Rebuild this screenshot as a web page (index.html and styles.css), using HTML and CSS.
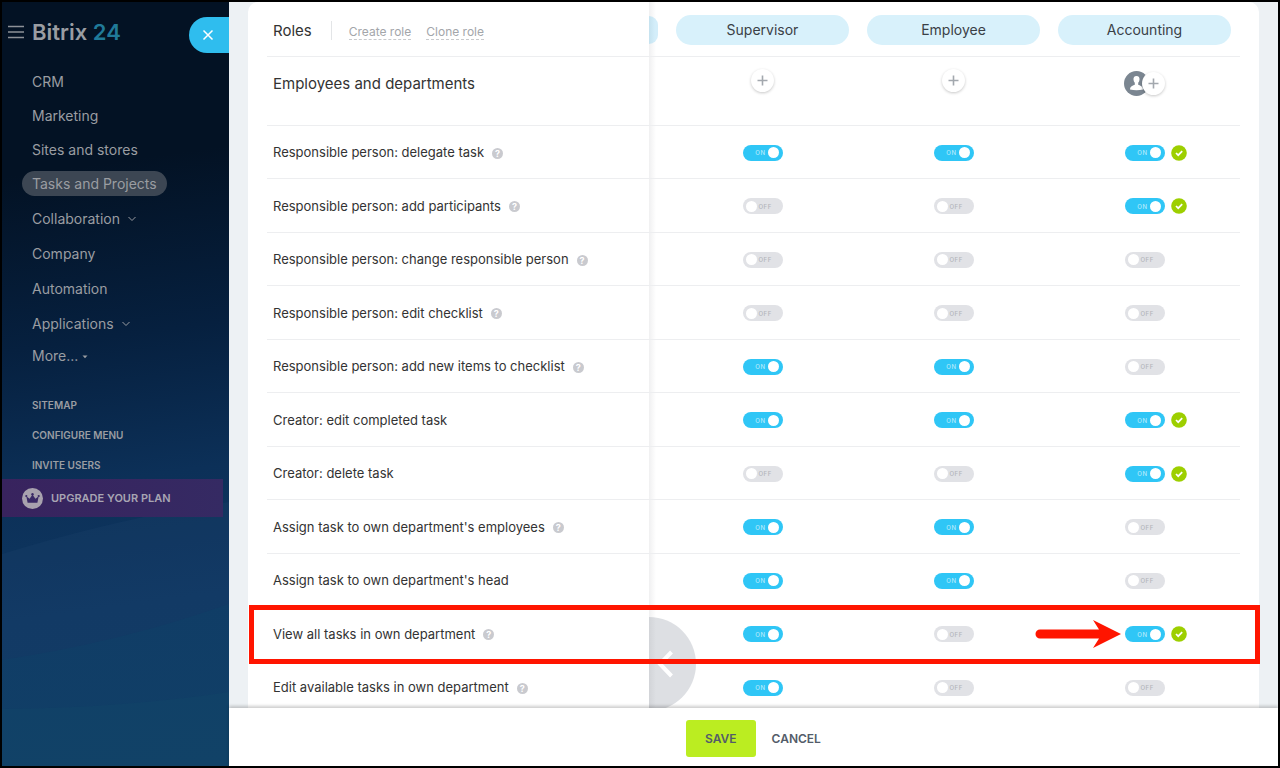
FILE: index.html
```html
<!DOCTYPE html>
<html lang="en">
<head>
    <meta charset="UTF-8">
    <meta name="viewport" content="width=device-width, initial-scale=1.0">
    <title>Bitrix 24 - Access permissions</title>
    <link rel="stylesheet" href="styles.css">
</head>
<body>
    <aside class="sidebar">
        <svg class="sidebar-waves" viewBox="0 0 227 764" preserveAspectRatio="none" aria-hidden="true">
            <path d="M0 552 Q120 515 227 500 V764 H0Z" fill="#4d78a8" opacity=".06"/>
            <path d="M0 658 Q120 640 227 602 V764 H0Z" fill="#0b5a70" opacity=".12"/>
            <path d="M0 707 Q120 706 227 690 V764 H0Z" fill="#1c6478" opacity=".08"/>
        </svg>

        <header class="brand">
            <button type="button" class="burger" aria-label="Menu">
                <svg width="16" height="14" viewBox="0 0 16 14"><path d="M0 1.5h16M0 7h16M0 12.5h16" stroke="currentColor" stroke-width="1.6"/></svg>
            </button>
            <a href="#" class="logo">Bitrix <span>24</span></a>
        </header>

        <nav>
            <ul class="menu">
                <li><a href="#">CRM</a></li>
                <li><a href="#">Marketing</a></li>
                <li><a href="#">Sites and stores</a></li>
                <li><a href="#" class="active">Tasks and Projects</a></li>
                <li><a href="#">Collaboration <svg width="8" height="6" viewBox="0 0 8 6"><path d="M.5 1 4 4.5 7.5 1" fill="none" stroke="currentColor"/></svg></a></li>
                <li><a href="#">Company</a></li>
                <li><a href="#">Automation</a></li>
                <li><a href="#">Applications <svg width="8" height="6" viewBox="0 0 8 6"><path d="M.5 1 4 4.5 7.5 1" fill="none" stroke="currentColor"/></svg></a></li>
                <li class="more"><a href="#">More... <svg width="6" height="4" viewBox="0 0 6 4"><path d="M.5.5h5L3 3.2z" fill="currentColor"/></svg></a></li>
            </ul>
            <ul class="submenu">
                <li><a href="#">SITEMAP</a></li>
                <li><a href="#">CONFIGURE MENU</a></li>
                <li><a href="#">INVITE USERS</a></li>
            </ul>
            <a href="#" class="upgrade">
                <svg width="21" height="21" viewBox="0 0 21 21"><circle cx="10.5" cy="10.5" r="10.5" fill="#a8a2ae"/><path d="M5.600 14.800 4.300 8.200l3.300 2.500L10.500 6.500l2.900 4.200 3.300-2.500-1.300 6.600z" fill="#3a2a66"/><circle cx="10.5" cy="6.2" r="1.2" fill="#3a2a66"/><circle cx="4.3" cy="8" r="1.1" fill="#3a2a66"/><circle cx="16.7" cy="8" r="1.1" fill="#3a2a66"/></svg>
                <span>UPGRADE YOUR PLAN</span>
            </a>
        </nav>

        <button type="button" class="close-tab" aria-label="Close">
            <svg width="12" height="12" viewBox="0 0 12 12"><path d="M1.500 1.500l9 9M10.500 1.500l-9 9" stroke="currentColor" stroke-width="1.5"/></svg>
        </button>
    </aside>

    <main class="panel">
        <div class="content">
            <section class="card">
                <table class="rights">
                    <colgroup>
                        <col>
                        <col class="col-edge">
                        <col class="col-role">
                        <col class="col-role">
                        <col class="col-role">
                    </colgroup>
                    <thead>
                        <tr>
                            <th scope="col">
                                <div class="roles-head">
                                    <span class="roles-title">Roles</span>
                                    <a href="#">Create role</a>
                                    <a href="#">Clone role</a>
                                </div>
                            </th>
                            <td class="edge"><span class="pill-end"></span></td>
                            <th scope="col"><span class="pill">Supervisor</span></th>
                            <th scope="col"><span class="pill">Employee</span></th>
                            <th scope="col"><span class="pill">Accounting</span></th>
                        </tr>
                        <tr class="members">
                            <th scope="row">Employees and departments</th>
                            <td class="edge"></td>
                            <td><div class="people"><button type="button" class="add" aria-label="Add to Supervisor"><svg width="11" height="11" viewBox="0 0 11 11"><path d="M5.500 .5v10M.5 5.500h10" stroke="currentColor" stroke-width="1.6"/></svg></button></div></td>
                            <td><div class="people"><button type="button" class="add" aria-label="Add to Employee"><svg width="11" height="11" viewBox="0 0 11 11"><path d="M5.500 .5v10M.5 5.500h10" stroke="currentColor" stroke-width="1.6"/></svg></button></div></td>
                            <td>
                                <div class="people has-members">
                                    <svg class="avatar" width="25" height="25" viewBox="0 0 25 25"><circle cx="12.5" cy="12.5" r="12.5" fill="#7b8691"/><path d="M12.500 5c2.300 0 3.200 1.500 3 3.700-.1 1.300-.6 2.300-1.300 3.100v2c1.500.8 4.600 1.200 4.800 4.700-4 1-9 1-13 0 .2-3.500 3.300-3.900 4.800-4.700v-2c-.7-.8-1.200-1.800-1.300-3.100C9.300 6.500 10.200 5 12.500 5z" fill="#fff"/></svg>
                                    <button type="button" class="add" aria-label="Add to Accounting"><svg width="11" height="11" viewBox="0 0 11 11"><path d="M5.500 .5v10M.5 5.500h10" stroke="currentColor" stroke-width="1.6"/></svg></button>
                                </div>
                            </td>
                        </tr>
                    </thead>
                    <tbody id="rightsBody"></tbody>
                </table>
            </section>
        </div>

        <footer class="actions">
            <button type="button" class="btn-save">SAVE</button>
            <button type="button" class="btn-cancel">CANCEL</button>
        </footer>
    </main>

    <script src="script.js"></script>
</body>
</html>
```

FILE: script.js
```js
const roles = ['Supervisor', 'Employee', 'Accounting'];

// [title, has a hint, state for each role]
const rights = [
    ['Responsible person: delegate task', true, [1, 1, 1]],
    ['Responsible person: add participants', true, [0, 0, 1]],
    ['Responsible person: change responsible person', true, [0, 0, 0]],
    ['Responsible person: edit checklist', true, [0, 0, 0]],
    ['Responsible person: add new items to checklist', true, [1, 1, 0]],
    ['Creator: edit completed task', false, [1, 1, 1]],
    ['Creator: delete task', false, [0, 0, 1]],
    ["Assign task to own department's employees", true, [1, 1, 0]],
    ["Assign task to own department's head", false, [1, 1, 0]],
    ['View all tasks in own department', true, [1, 0, 1]],
    ['Edit available tasks in own department', true, [1, 0, 0]]
];
const highlighted = 9;

const hint = '<button type="button" class="hint" aria-label="Help">?</button>';
const check = '<svg class="check" width="16" height="16" viewBox="0 0 16 16"><circle cx="8" cy="8" r="7.8" fill="#9dcf00"/><path d="M5 8l2.200 2.200L11.200 6.200" fill="none" stroke="#fff" stroke-width="1.7"/></svg>';
const arrow = '<svg class="arrow" width="86" height="28" viewBox="0 0 86 28"><path d="M5 9.500h59L58 0l28 14-28 14 6-9.500H5a4.500 4.500 0 0 1 0-9z" fill="#ff1500"/></svg>';
const scrollLeft = '<button type="button" class="scroll-left" aria-label="Scroll left"><svg width="18" height="28" viewBox="0 0 18 28"><path d="M15.500 2 4 14l11.500 12" fill="none" stroke="#fff" stroke-width="4"/></svg></button>';

function toggle(title, role, on) {
    return `<label class="toggle ${on ? 'on' : ''}">
        <input type="checkbox" aria-label="${title}, ${role}" ${on ? 'checked' : ''}>
        <span>${on ? 'ON' : 'OFF'}</span>
        ${on && role === 'Accounting' ? check : ''}
    </label>`;
}

const body = document.getElementById('rightsBody');

body.innerHTML = rights.map(([title, hasHint, states], row) => {
    const marked = row === highlighted;
    const cells = states.map((on, i) =>
        `<td>${marked && i === 2 ? arrow : ''}${toggle(title, roles[i], on)}</td>`
    ).join('');
    return `<tr${marked ? ' class="marked"' : ''}>
        <th scope="row">${title}${hasHint ? hint : ''}${marked ? '<div class="frame"></div>' : ''}</th>
        <td class="edge">${marked ? scrollLeft : ''}</td>
        ${cells}
    </tr>`;
}).join('');

body.addEventListener('change', function(event) {
    const label = event.target.closest('.toggle');
    label.classList.toggle('on', event.target.checked);
    label.querySelector('span').textContent = event.target.checked ? 'ON' : 'OFF';
});
```

FILE: styles.css
```css
* {
    box-sizing: border-box;
}

body {
    display: flex;
    height: 100vh;
    margin: 0;
    border: 2px solid #000;
    overflow: hidden;
    font-family: Inter, "Liberation Sans", sans-serif;
    font-size: 13px;
    color: #333;
}

button {
    font-family: inherit;
    padding: 0;
    border: none;
    background: none;
    cursor: pointer;
}

a {
    color: inherit;
    text-decoration: none;
}

svg {
    display: block;
}

ul {
    list-style: none;
    margin: 0;
    padding: 0;
}

/* Sidebar */
.sidebar {
    position: relative;
    flex: 0 0 227px;
    background: linear-gradient(172deg, #031224 0%, #031224 22%, #06203f 44%, #0c3058 62%, #0e3761 78%, #0f3962 100%);
    color: #9a9da2;
}

.sidebar-waves {
    position: absolute;
    inset: 0;
    width: 100%;
    height: 100%;
}

.brand {
    position: relative;
    display: flex;
    align-items: center;
    gap: 8px;
    height: 60px;
    padding-left: 6px;
}

.burger {
    color: #8d9197;
}

.logo {
    font-size: 22px;
    font-weight: 600;
}

.logo span {
    color: #207a99;
}

nav {
    position: relative;
}

.menu {
    display: flex;
    flex-direction: column;
    gap: 10px;
    padding: 7px 0 0 20px;
    font-size: 14px;
}

.menu li {
    display: flex;
    height: 24px;
}

.menu li:nth-child(n+4) {
    height: 25px;
}

.menu li.more {
    height: 18px;
}

.menu a {
    display: flex;
    align-items: center;
    gap: 8px;
    padding: 0 10px;
}

.menu .more a {
    gap: 4px;
}

.menu .more svg {
    margin-top: 4px;
}

.menu .active {
    border-radius: 13px;
    background: #3c4653;
}

.submenu {
    display: flex;
    flex-direction: column;
    gap: 10px;
    padding: 31px 0 4px 30px;
    font-size: 10px;
    font-weight: 600;
    line-height: 20px;
}

.submenu li {
    height: 20px;
}

.upgrade {
    display: flex;
    align-items: center;
    gap: 8px;
    height: 38px;
    margin-right: 6px;
    padding-left: 20px;
    background: linear-gradient(90deg, #38235e, #352a63);
    font-size: 11px;
    font-weight: 600;
    color: #a8a5b3;
}

.close-tab {
    position: absolute;
    top: 15px;
    right: 0;
    display: flex;
    align-items: center;
    width: 40px;
    height: 36px;
    padding-left: 13px;
    border-radius: 18px 0 0 18px;
    background: #2fbdee;
    color: #fff;
}

/* Slider panel */
.panel {
    flex: 1;
    display: flex;
    flex-direction: column;
    min-width: 0;
}

.content {
    flex: 1;
    min-height: 0;
    padding: 0 19px;
    overflow: hidden;
    background: #edf1f4;
}

.card {
    padding: 0 19px;
    border-radius: 10px 10px 0 0;
    background: #fff;
}

.rights {
    width: 100%;
    table-layout: fixed;
    border-collapse: separate;
    border-spacing: 0;
}

.col-edge {
    width: 18px;
}

.col-role {
    width: 191px;
}

.rights th,
.rights td {
    height: 53px;
    padding: 0;
    border-bottom: 1px solid #edeef0;
    font-weight: 400;
    text-align: center;
}

.rights tbody tr:nth-child(even) > * {
    height: 54px;
}

.rights thead tr > * {
    height: 55px;
    padding-top: 2px;
}

.rights thead .members > * {
    height: 69px;
    padding-top: 0;
}

.rights tr > th:first-child {
    padding-left: 6px;
    text-align: left;
    white-space: nowrap;
}

.rights thead .members > th:first-child {
    padding-bottom: 15px;
    font-size: 15px;
}

.roles-head {
    display: flex;
    align-items: center;
    gap: 15px;
    font-size: 12px;
    color: #a3a6aa;
}

.roles-head a {
    padding-top: 3px;
    border-bottom: 1px dashed #c8cacd;
}

.roles-title {
    padding-right: 19px;
    margin-right: 2px;
    border-right: 1px solid #e3e5e7;
    font-size: 15px;
    color: #333;
}

.pill {
    display: block;
    margin: 0 9px;
    border-radius: 15px;
    background: #d8f1fb;
    font-size: 14px;
    line-height: 30px;
    color: #3a4046;
}

.edge {
    background: linear-gradient(90deg, #f0f0f1, #fff 7px);
}

.pill-end {
    display: block;
    width: 9px;
    height: 28px;
    border-radius: 0 14px 14px 0;
    background: linear-gradient(90deg, #c5e2ef, #d4eefa 6px);
}

.people {
    display: flex;
    justify-content: center;
    align-items: center;
    padding-bottom: 21px;
}

.people.has-members {
    padding-bottom: 15px;
}

.add {
    display: flex;
    justify-content: center;
    align-items: center;
    width: 23px;
    height: 23px;
    border-radius: 50%;
    background: #fff;
    box-shadow: 0 1px 3px rgba(0, 0, 0, 0.22);
    color: #a3a8ae;
}

.avatar + .add {
    margin-left: -7px;
}

.hint {
    width: 11px;
    height: 11px;
    margin-left: 8px;
    border-radius: 50%;
    background: #c9cacf;
    font-size: 9px;
    font-weight: 700;
    line-height: 11px;
    color: #fff;
    vertical-align: middle;
}

/* Toggles */
.toggle {
    position: relative;
    display: inline-flex;
    align-items: center;
    flex-direction: row;
    gap: 2px;
    width: 40px;
    height: 16px;
    padding: 0 4px 0 3px;
    border-radius: 8px;
    background: #e1e2e6;
    font-size: 6px;
    font-weight: 500;
    letter-spacing: 0.5px;
    color: #b3b5ba;
    vertical-align: middle;
    cursor: pointer;
}

.toggle.on {
    flex-direction: row-reverse;
    background: #2fc6f6;
    color: #b5eafb;
}

.toggle input {
    appearance: none;
    width: 11px;
    height: 11px;
    margin: 0;
    border-radius: 50%;
    background: #fff;
}

.check {
    position: absolute;
    top: 0;
    left: 46px;
}

/* Highlighted row */
.marked,
.marked td {
    position: relative;
}

.frame {
    position: absolute;
    inset: -2px -20px -3px -18px;
    z-index: 2;
    border: 5px solid #ff1500;
    pointer-events: none;
}

.arrow {
    position: absolute;
    top: 13px;
    left: -14px;
}

.scroll-left {
    position: absolute;
    top: 10px;
    left: 0;
    z-index: 1;
    display: flex;
    align-items: center;
    width: 47px;
    height: 94px;
    padding-left: 7px;
    border-radius: 0 47px 47px 0;
    background: linear-gradient(90deg, #d2d4d8, #dddfe3 7px);
}

/* Footer */
.actions {
    position: relative;
    display: flex;
    flex: 0 0 58px;
    justify-content: center;
    align-items: center;
    gap: 16px;
    padding-top: 3px;
    background: #fff;
    box-shadow: 0 -2px 3px rgba(0, 0, 0, 0.2);
    z-index: 3;
}

.btn-save,
.btn-cancel {
    height: 37px;
    font-size: 12px;
    font-weight: 600;
    color: #535c69;
}

.btn-save {
    padding: 0 19px;
    border-radius: 3px;
    background: #bbed21;
}
```
